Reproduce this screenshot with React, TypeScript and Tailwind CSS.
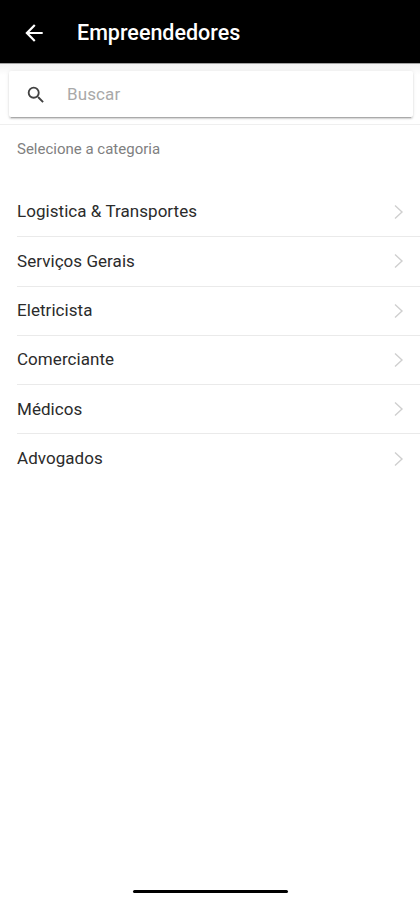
const categories = [
  "Logistica & Transportes",
  "Serviços Gerais",
  "Eletricista",
  "Comerciante",
  "Médicos",
  "Advogados",
];

function BackIcon() {
  return (
    <svg viewBox="0 0 512 512" className="h-[26px] w-[26px] fill-white">
      <path d="M427 234.625H167.296l119.702-119.702L256 85 85 256l171 171 29.922-29.924-118.626-119.701H427v-42.75z" />
    </svg>
  );
}

function SearchIcon() {
  return (
    <svg viewBox="0 0 24 24" className="h-[22px] w-[22px] fill-[#424242]">
      <path d="M15.5 14h-.79l-.28-.27A6.47 6.47 0 0 0 16 9.5 6.5 6.5 0 1 0 9.5 16c1.61 0 3.09-.59 4.23-1.57l.27.28v.79l5 4.99L20.49 19l-4.99-5zm-6 0C7.01 14 5 11.99 5 9.5S7.01 5 9.5 5 14 7.01 14 9.5 11.99 14 9.5 14z" />
    </svg>
  );
}

function ChevronIcon() {
  return (
    <svg viewBox="0 0 10 16" fill="none" className="h-4 w-[10px] stroke-[#cfcfcf]">
      <path d="M1 1.5 8 8l-7 6.5" strokeWidth="1.4" />
    </svg>
  );
}

export default function App() {
  return (
    <div className="flex h-[900px] w-[420px] flex-col overflow-hidden bg-white font-['Roboto',sans-serif]">
      <header className="flex h-[63px] shrink-0 items-center bg-black pl-[21px] pt-[3px]">
        <button type="button" aria-label="Voltar">
          <BackIcon />
        </button>
        <h1 className="ml-[30px] text-[21.5px] font-medium leading-none text-white">Empreendedores</h1>
      </header>

      <div className="h-[62px] shrink-0 border-b border-[#efefef] bg-linear-to-b from-[#f2f2f2] to-white to-20% pt-2 pl-[9px] pr-[7px] shadow-[inset_0_1px_0_#a3a3a3]">
        <label className="flex h-[46px] items-center rounded-xs bg-white pl-4 pt-0.5 shadow-[0_2px_2px_rgba(0,0,0,0.14),0_3px_1px_-2px_rgba(0,0,0,0.2),0_0_4px_rgba(0,0,0,0.08)]">
          <SearchIcon />
          <input
            placeholder="Buscar"
            className="ml-5 w-[280px] bg-transparent text-[17px] tracking-[0.1px] outline-none placeholder:text-[#a9a9a9]"
          />
        </label>
      </div>

      <main>
        <p className="h-[63px] pl-[17px] pt-[14px] text-[15px] leading-5 text-[#808080]">Selecione a categoria</p>
        <ul>
          {categories.map((name) => (
            <li key={name} className="group flex h-[49.3px] pl-[17px]">
              <div className="flex grow items-center justify-between border-b border-[#eaeaea] pr-4 group-last:border-transparent">
                <span className="text-[17px] tracking-[0.05px] text-[#2b2b2b]">{name}</span>
                <ChevronIcon />
              </div>
            </li>
          ))}
        </ul>
      </main>

      <div className="mx-auto mb-[7px] mt-auto h-[3px] w-[155px] rounded-full bg-black" />
    </div>
  );
}
